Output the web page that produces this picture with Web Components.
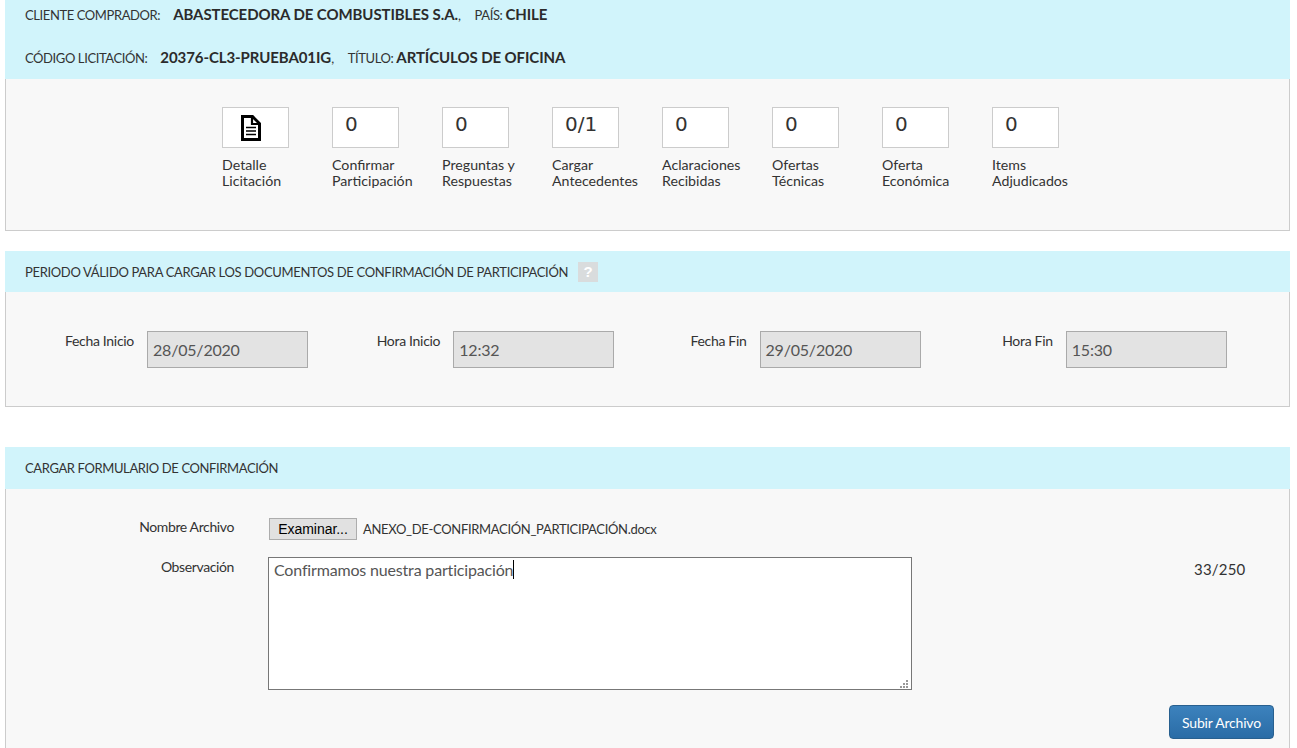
<!DOCTYPE html>
<html lang="es"><head><meta charset="utf-8"><title>Confirmar Participación</title>
<style>
html,body{margin:0;padding:0;overflow:hidden;height:748px;background:#fff}
body{font-family:Lato,"Liberation Sans",sans-serif;color:#333}
</style></head><body>
<x-page>
  <x-info-head>
    <x-info-row><span slot="label">CLIENTE COMPRADOR:</span><b>ABASTECEDORA DE COMBUSTIBLES S.A.</b><span>,</span><span class="l">PAÍS:</span><b>CHILE</b></x-info-row>
    <x-info-row><span slot="label">CÓDIGO LICITACIÓN:</span><b>20376-CL3-PRUEBA01IG</b><span>,</span><span class="l">TÍTULO:</span><b>ARTÍCULOS DE OFICINA</b></x-info-row>
  </x-info-head>
  <x-panel style="--h:152px">
    <x-steps>
      <x-step><x-doc-icon slot="box"></x-doc-icon>Detalle<br>Licitación</x-step>
      <x-step><span slot="box">0</span>Confirmar<br>Participación</x-step>
      <x-step><span slot="box">0</span>Preguntas y<br>Respuestas</x-step>
      <x-step><span slot="box">0/1</span>Cargar<br>Antecedentes</x-step>
      <x-step><span slot="box">0</span>Aclaraciones<br>Recibidas</x-step>
      <x-step><span slot="box">0</span>Ofertas<br>Técnicas</x-step>
      <x-step><span slot="box">0</span>Oferta<br>Económica</x-step>
      <x-step><span slot="box">0</span>Items<br>Adjudicados</x-step>
    </x-steps>
  </x-panel>
  <x-head style="--h:41px;--mt:20px;--ls:-.33px">PERIODO VÁLIDO PARA CARGAR LOS DOCUMENTOS DE CONFIRMACIÓN DE PARTICIPACIÓN<x-help></x-help></x-head>
  <x-panel style="--h:115px">
    <x-dates>
      <x-date label="Fecha Inicio">28/05/2020</x-date>
      <x-date label="Hora Inicio">12:32</x-date>
      <x-date label="Fecha Fin">29/05/2020</x-date>
      <x-date label="Hora Fin">15:30</x-date>
    </x-dates>
  </x-panel>
  <x-head style="--h:42px;--mt:40px;--ls:-.38px">CARGAR FORMULARIO DE CONFIRMACIÓN</x-head>
  <x-panel style="--h:280px"><x-upload-form></x-upload-form></x-panel>
</x-page>
<script>
const def=(name,html)=>customElements.define(name,class extends HTMLElement{
  constructor(){super();this.attachShadow({mode:'open'}).innerHTML=typeof html==='function'?html(this):html}
});
def('x-page',`<style>:host{display:block;margin:0 7px 0 5px}</style><slot></slot>`);
def('x-info-head',`<style>:host{display:block;box-sizing:border-box;height:79px;background:#d1f4fb;padding:0 20px}</style><slot></slot>`);
def('x-head',`<style>:host{display:flex;align-items:center;box-sizing:border-box;height:var(--h);margin-top:var(--mt,0);background:#d1f4fb;padding:0 20px;font-size:13px;letter-spacing:var(--ls);color:#333;white-space:nowrap}</style><slot></slot>`);
def('x-info-row',`<style>:host{display:flex;align-items:baseline;height:43px;line-height:28px;font-size:13px;letter-spacing:-.4px;white-space:nowrap}
.lab{margin-right:13px}
::slotted(b){font-size:15px;font-weight:700;color:#2b2b2b;letter-spacing:-.09px}
::slotted(.l){margin-left:14px;padding-right:3px}</style><span class="lab"><slot name="label"></slot></span><slot></slot>`);
def('x-panel',`<style>:host{display:block;box-sizing:border-box;height:var(--h);background:#f8f8f8;border:1px solid #ccc;border-top:0}</style><slot></slot>`);
def('x-steps',`<style>:host{display:flex;gap:43px;padding:28px 0 0 216px}</style><slot></slot>`);
def('x-step',`<style>:host{display:block;width:67px;font-size:14.2px;line-height:16px;color:#333;white-space:nowrap}
.box{box-sizing:border-box;width:67px;height:41px;background:#fff;border:1px solid #ccc;margin-bottom:9px;display:flex;align-items:center;padding:0 0 7px 12px;font:20px "DejaVu Sans",sans-serif;color:#333}
</style><div class="box"><slot name="box"></slot></div><slot></slot>`);
def('x-doc-icon',`<style>:host{display:block;margin:7px 0 0 6px;height:26px}</style>
<svg width="20" height="26" viewBox="0 0 20 26" fill="none" stroke="#000"><path d="M1.500 1.500h10l7 7v16h-17z" stroke-width="3"/><path d="M11 2v7h7" stroke-width="2.200"/><path d="M5 12.500h10M5 16h10M5 19.500h10" stroke-width="1.600"/></svg>`);
def('x-help',`<style>:host{display:inline-flex;align-items:center;justify-content:center;width:20px;height:20px;margin-left:10px;background:#d9dcdd;color:#fff;font:700 15px "Liberation Sans",sans-serif;letter-spacing:0}</style>?`);
def('x-dates',`<style>:host{display:grid;grid-template-columns:repeat(4,306.25px);padding:39px 0 0 29px}</style><slot></slot>`);
def('x-date',el=>`<style>:host{display:flex;gap:13px}
.l{width:99px;text-align:right;font-size:14px;letter-spacing:-.3px;line-height:20px}
.v{box-sizing:border-box;width:161px;height:37px;background:#e3e3e3;border:1px solid #aaa;padding:8px 5px 0;font-size:16px;letter-spacing:-.2px;line-height:20px;color:#555}</style>
<div class="l">${el.getAttribute('label')}</div><div class="v"><slot></slot></div>`);
def('x-upload-form',`<style>:host{display:block;padding-top:28px;font-size:14px}
.row{display:grid;grid-template-columns:228px auto 1fr;column-gap:34px}
.l{text-align:right;line-height:20px;letter-spacing:-.38px;color:#333}
.file{display:flex;align-items:center;gap:6px;height:22px;margin:1px 0 0 1px;color:#333}
.file span{font-size:13px;letter-spacing:-.32px}
.btn{box-sizing:border-box;width:88px;height:22px;background:#e1e1e1;border:1px solid #adadad;font:14px "Liberation Sans",sans-serif;letter-spacing:-.03px;color:#000;display:flex;align-items:center;justify-content:center}
.r2{margin-top:17px}
.ta{position:relative;box-sizing:border-box;width:644px;height:133px;background:#fff;border:1px solid #777;padding:2px 5px;font-size:16px;letter-spacing:-.17px;line-height:20px;color:#555}
.caret{border-right:1px solid #000}
.grip{position:absolute;right:2px;bottom:1px}
.count{font-size:15px;letter-spacing:.2px;padding:2px 0 0 248px;line-height:20px;color:#333}
.act{display:flex;justify-content:flex-end;padding:15px 15px 0 0}
.sub{box-sizing:border-box;width:105px;height:34px;border-radius:4px;border:1px solid #28608f;background:linear-gradient(#3c82bd,#2a6ca6);color:#fff;font-size:14px;letter-spacing:-.2px;display:flex;align-items:center;justify-content:center}
</style>
<div class="row"><div class="l">Nombre Archivo</div><div class="file"><div class="btn">Examinar...</div><span>ANEXO_DE-CONFIRMACIÓN_PARTICIPACIÓN.docx</span></div></div>
<div class="row r2"><div class="l">Observación</div><div class="ta"><span class="caret">Confirmamos nuestra participación</span>
<svg class="grip" width="10" height="8" viewBox="0 0 10 8" fill="#999"><rect x="7" y="0" width="2" height="2"/><rect x="4" y="3" width="2" height="2"/><rect x="7" y="3" width="2" height="2"/><rect x="1" y="6" width="2" height="2"/><rect x="4" y="6" width="2" height="2"/><rect x="7" y="6" width="2" height="2"/></svg></div><div class="count">33/250</div></div>
<div class="act"><div class="sub">Subir Archivo</div></div>`);
</script>
</body></html>
